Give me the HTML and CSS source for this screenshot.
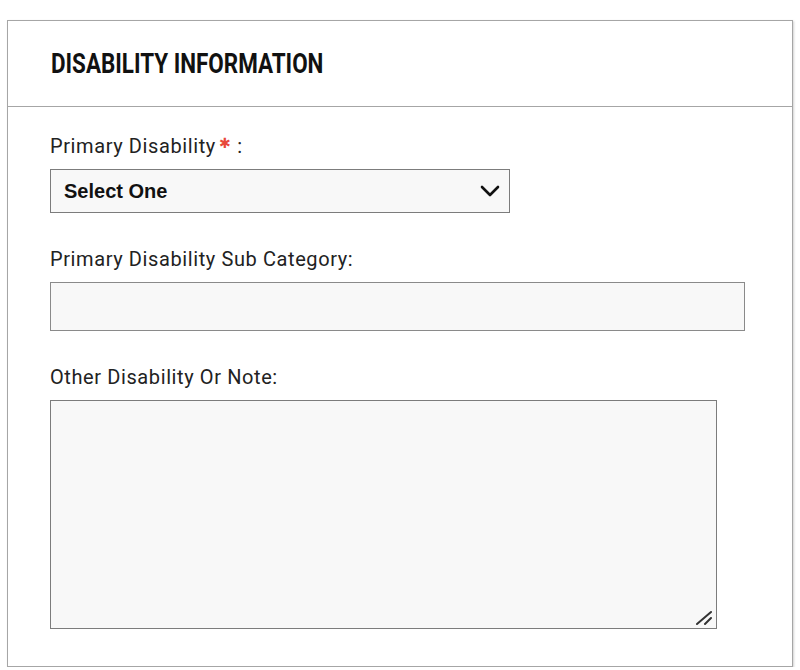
FILE: index.html
```html
<!DOCTYPE html>
<html>
<head>
    <title>Disability Information</title>
    <link rel="stylesheet" href="styles.css">
</head>
<body>
    <div class="panel">
        <div class="panel-head">
            <h2><span>DISABILITY INFORMATION</span></h2>
        </div>
        <div class="panel-body">
            <div class="field">
                <label for="primary">Primary Disability<span class="req">✱</span>:</label>
                <div class="select-wrap">
                    <select id="primary">
                        <option>Select One</option>
                    </select>
                    <svg class="chevron" width="20" height="12" viewBox="0 0 20 12">
                        <path d="M2 2 L10 10 L18 2" fill="none" stroke="#111" stroke-width="2.6" stroke-linecap="round" stroke-linejoin="round"/>
                    </svg>
                </div>
            </div>
            <div class="field">
                <label for="sub">Primary Disability Sub Category:</label>
                <input id="sub" type="text" class="text-input">
            </div>
            <div class="field">
                <label for="note">Other Disability Or Note:</label>
                <div class="note-wrap">
                    <textarea id="note" class="note"></textarea>
                    <!-- resize grip -->
                    <svg class="grip" width="18" height="16" viewBox="0 0 18 16">
                        <path d="M1 14 L15 2 M9 14 L15 8" stroke="#333" stroke-width="2" stroke-linecap="round"/>
                    </svg>
                </div>
            </div>
        </div>
    </div>
</body>
</html>
```

FILE: styles.css
```css
body {
    margin: 0;
    background: #fff;
    font-family: Roboto, "Liberation Sans", sans-serif;
    color: #222;
}
.panel {
    margin: 20px 0 0 7px;
    width: 784px;
    border: 1px solid #a6a6a6;
    box-shadow: 1px 1px 2px rgba(0,0,0,0.18);
    background: #fff;
}
.panel-head {
    height: 85px;
    border-bottom: 1px solid #a6a6a6;
    display: flex;
    align-items: center;
    padding-left: 43px;
}
.panel-head h2 {
    margin: 0;
    font-size: 27px;
    font-weight: 700;
    color: #111;
}
.panel-head h2 span {
    display: inline-block;
    transform: scaleX(0.83);
    transform-origin: left center;
    white-space: nowrap;
}
.panel-body {
    padding: 27px 0 37px 42px;
}
.field {
    margin-bottom: 34px;
}
.field:last-child {
    margin-bottom: 0;
}
label {
    display: block;
    font-size: 20px;
    letter-spacing: 0.6px;
    line-height: 24px;
    margin-bottom: 11px;
    color: #222;
}
.req {
    font-family: "DejaVu Sans", sans-serif;
    color: #e8483b;
    font-size: 14px;
    margin-left: 3px;
    margin-right: 6px;
    vertical-align: 5px;
    line-height: 0;
}
.select-wrap {
    position: relative;
    width: 460px;
}
select {
    appearance: none;
    -webkit-appearance: none;
    width: 460px;
    height: 44px;
    border: 1px solid #7c7c7c;
    border-radius: 0;
    background: #f8f8f8;
    padding: 0 40px 0 13px;
    font-family: "Liberation Sans", Arial, sans-serif;
    font-size: 20px;
    font-weight: 700;
    color: #111;
}
.chevron {
    position: absolute;
    right: 10px;
    top: 16px;
    pointer-events: none;
}
.text-input {
    display: block;
    box-sizing: border-box;
    width: 695px;
    height: 49px;
    border: 1px solid #8a8a8a;
    border-radius: 0;
    background: #f8f8f8;
    margin: 0;
}
.note-wrap {
    position: relative;
    width: 667px;
}
.note {
    display: block;
    box-sizing: border-box;
    width: 667px;
    height: 229px;
    border: 1px solid #7c7c7c;
    border-radius: 0;
    background: #f8f8f8;
    margin: 0;
    resize: none;
}
.grip {
    position: absolute;
    right: 3px;
    bottom: 3px;
    pointer-events: none;
}
```
